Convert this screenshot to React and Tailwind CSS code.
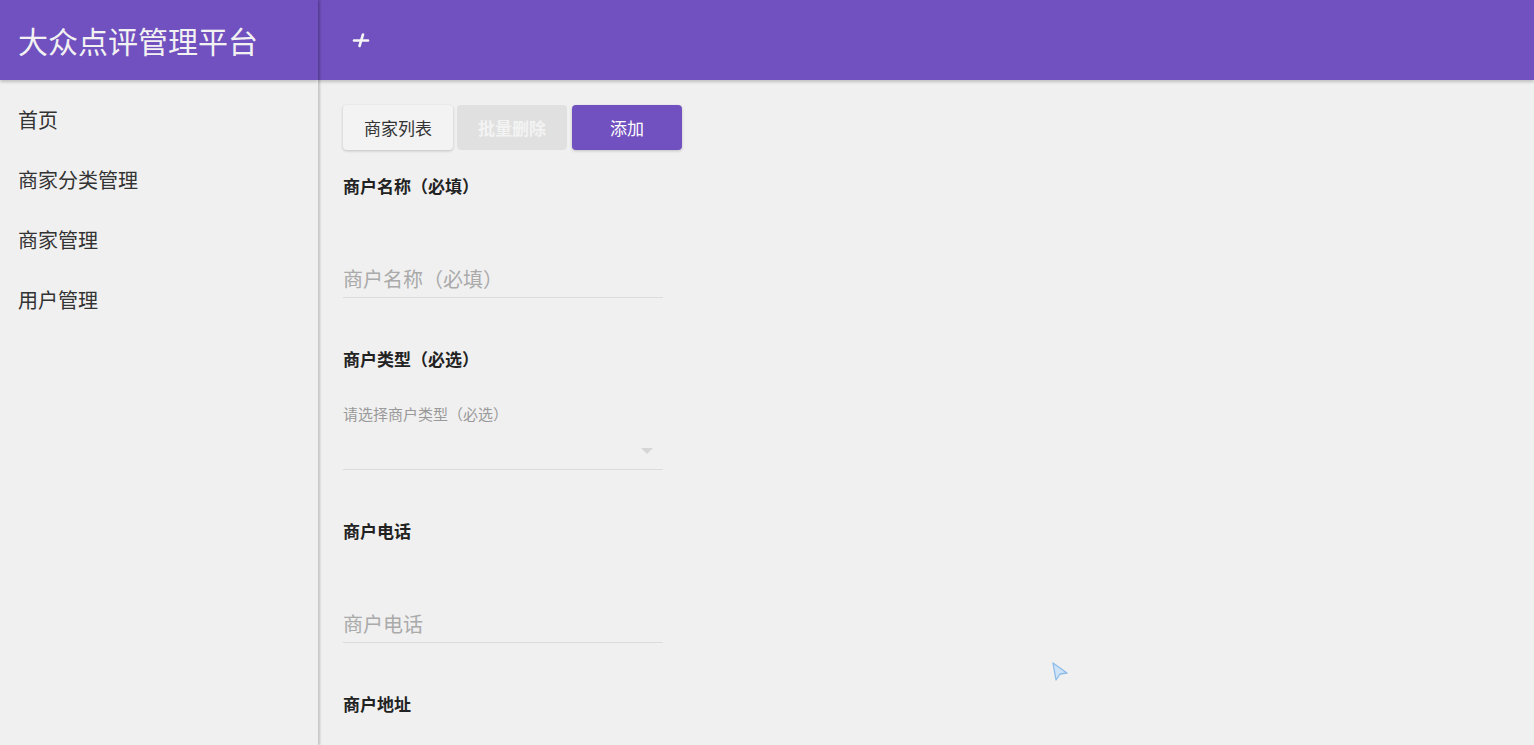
import React from "react";

const font = { fontFamily: '"Noto Sans CJK SC", "Noto Sans", sans-serif' };

function Label({ children }) {
  return <div className="h-5 text-[17px] leading-5 font-bold text-[#222]">{children}</div>;
}

function TextInput({ placeholder }) {
  return (
    <div className="h-[102px] w-[320px] flex items-end border-b border-[#dcdcdc]">
      <div className="pb-[6px] text-[20px] leading-6 text-[#aaaaaa]">{placeholder}</div>
    </div>
  );
}

function SelectInput({ label }) {
  return (
    <div className="relative h-[101px] w-[320px] border-b border-[#dcdcdc]">
      <div className="absolute left-0 top-[35px] text-[15px] leading-5 text-[#999]">{label}</div>
      <div className="absolute right-[10px] top-[79px] w-0 h-0 border-l-[6px] border-r-[6px] border-t-[6px] border-l-transparent border-r-transparent border-t-[#d6d6d6]" />
    </div>
  );
}

export default function App() {
  const navItems = ["首页", "商家分类管理", "商家管理", "用户管理"];

  return (
    <div className="relative flex h-[745px] w-full overflow-hidden bg-[#f0f0f0]" style={font}>
      {/* Sidebar drawer */}
      <aside className="relative z-10 flex w-[318px] shrink-0 flex-col bg-[#f0f0f0] shadow-[2px_0_2px_rgba(0,0,0,0.18)]">
        <div className="flex h-20 items-center bg-[#7150bf] pl-[18px] text-[30px] text-[#f2f2f2] shadow-[0_2px_3px_rgba(0,0,0,0.2)]">
          大众点评管理平台
        </div>
        <nav className="pt-[10px]">
          {navItems.map((item) => (
            <div key={item} className="flex h-[60px] items-center pl-[18px] text-[20px] text-[#333]">
              {item}
            </div>
          ))}
        </nav>
      </aside>

      {/* Main */}
      <div className="flex flex-1 flex-col">
        <header className="flex h-20 shrink-0 items-center bg-[#7150bf] pl-[34px] shadow-[0_2px_3px_rgba(0,0,0,0.2)]">
          <svg width="18" height="18" viewBox="0 0 18 18">
            <path d="M2 9.5h14" stroke="#f5f5f5" strokeWidth="2.6" strokeLinecap="round" />
            <path d="M11 3.5L7.5 15" stroke="#f5f5f5" strokeWidth="2.6" strokeLinecap="round" />
          </svg>
        </header>

        <main className="pl-[25px] pt-[25px]">
          <div className="flex gap-1">
            <button className="h-[45px] w-[110px] rounded-sm bg-[#f3f3f3] text-[17px] text-[#333] shadow-[0_1px_3px_rgba(0,0,0,0.2)]">
              商家列表
            </button>
            <button className="h-[45px] w-[110px] rounded-sm bg-[#e0e0e0] text-[17px] font-bold text-[#f3f3f3]">
              批量删除
            </button>
            <button className="ml-[1px] h-[45px] w-[110px] rounded-sm bg-[#7150bf] text-[17px] text-white shadow-[0_1px_3px_rgba(0,0,0,0.2)]">
              添加
            </button>
          </div>

          <div className="mt-[26px] flex flex-col">
            <Label>商户名称（必填）</Label>
            <TextInput placeholder="商户名称（必填）" />
            <div className="mt-[51px]">
              <Label>商户类型（必选）</Label>
            </div>
            <SelectInput label="请选择商户类型（必选）" />
            <div className="mt-[51px]">
              <Label>商户电话</Label>
            </div>
            <TextInput placeholder="商户电话" />
            <div className="mt-[51px]">
              <Label>商户地址</Label>
            </div>
          </div>
        </main>
      </div>

      {/* mouse pointer */}
      <svg className="absolute left-[1050px] top-[661px]" width="20" height="22" viewBox="0 0 20 22">
        <path d="M3 2 L17 12 L10 13 L6 19 Z" fill="#cfe3f7" stroke="#8dbbe8" strokeWidth="1.3" strokeLinejoin="round" />
      </svg>
    </div>
  );
}
